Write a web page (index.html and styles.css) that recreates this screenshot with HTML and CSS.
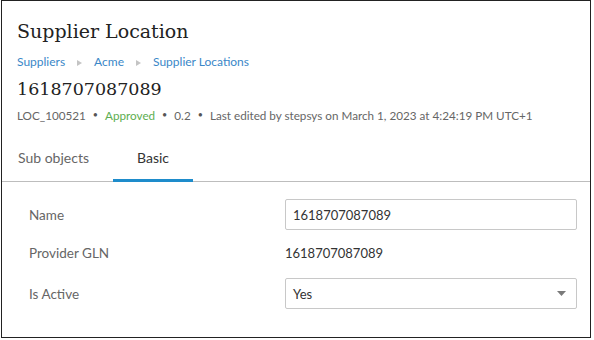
FILE: index.html
```html
<!DOCTYPE html>
<html lang="en">
<head>
<meta charset="utf-8">
<title>Supplier Location</title>
<link rel="stylesheet" href="styles.css">
</head>
<body>
<div class="panel">
  <header class="head">
    <h1 class="title">Supplier Location</h1>
    <nav class="crumbs">
      <a class="crumb" href="#">Suppliers</a>
      <span class="crumb-sep"></span>
      <a class="crumb" href="#">Acme</a>
      <span class="crumb-sep"></span>
      <a class="crumb" href="#">Supplier Locations</a>
    </nav>
    <h2 class="obj-id">1618707087089</h2>
    <div class="meta">
      <span class="meta-id">LOC_100521</span>
      <span class="dot">•</span>
      <span class="status">Approved</span>
      <span class="dot">•</span>
      <span>0.2</span>
      <span class="dot">•</span>
      <span>Last edited by stepsys on March 1, 2023 at 4:24:19 PM UTC+1</span>
    </div>
  </header>
  <div class="tabs">
    <div class="tab tab-first">Sub objects</div>
    <div class="tab tab-active">Basic</div>
  </div>
  <div class="form">
    <div class="row">
      <div class="label">Name</div>
      <div class="input">1618707087089</div>
    </div>
    <div class="row">
      <div class="label">Provider GLN</div>
      <div class="value">1618707087089</div>
    </div>
    <div class="row row-last">
      <div class="label">Is Active</div>
      <div class="input select">
        <span>Yes</span>
        <svg class="caret" width="9" height="5" viewBox="0 0 9 5"><path d="M0 0H9L4.5 5Z" fill="#7a7a7a"/></svg>
      </div>
    </div>
  </div>
</div>
</body>
</html>
```

FILE: styles.css
```css
* { box-sizing: border-box; }
html, body { margin: 0; padding: 0; background: #fff; }
body {
  font-family: Lato, "Open Sans", sans-serif;
  font-size: 12px;
  color: #333;
}
.panel {
  margin-left: 1px;
  width: 590px;
  height: 338px;
  border: 1px solid #222;
  background: #fff;
}
.head {
  padding: 17px 15px 0 15px;
}
.title {
  margin: 0;
  font-family: "DejaVu Serif", serif;
  font-weight: normal;
  font-size: 19px;
  line-height: 26px;
  color: #222;
}
.crumbs {
  margin-top: 9px;
  line-height: 18px;
  display: flex;
  align-items: center;
  white-space: nowrap;
}
.crumb {
  color: #3a87c8;
  text-decoration: none;
}
.crumb-sep {
  width: 0;
  height: 0;
  border-top: 3px solid transparent;
  border-bottom: 3px solid transparent;
  border-left: 5px solid #c4c4c4;
  margin: 1px 12px 0 12px;
}
.obj-id {
  margin: 7px 0 0 0;
  font-family: "DejaVu Serif", serif;
  font-weight: normal;
  font-size: 17.5px;
  line-height: 22px;
  color: #222;
}
.meta {
  margin-top: 6px;
  line-height: 18px;
  font-size: 11.7px;
  color: #666;
  display: flex;
  align-items: center;
  white-space: nowrap;
}
.dot {
  margin: 0 7px;
  font-size: 9px;
  color: #555;
}
.status { color: #5cae4f; }
.tabs {
  margin-top: 13px;
  display: flex;
  padding-left: 15px;
  border-bottom: 1px solid #bdbdbd;
}
.tab {
  padding: 12px 24px 12px 24px;
  line-height: 18px;
  font-size: 14px;
  color: #666;
  border-bottom: 3px solid transparent;
  margin-bottom: -1px;
}
.tab-first {
  padding-left: 1px;
}
.tab-active {
  color: #333;
  border-bottom-color: #1e8ccb;
}
.form {
  padding: 17px 12px 0 27px;
  display: flex;
  flex-direction: column;
  gap: 7px;
}
.row {
  display: grid;
  grid-template-columns: 256px 292px;
  align-items: center;
  min-height: 31px;
}
.row-last { margin-top: 3px; }
.label {
  font-size: 13.5px;
  color: #666;
}
.value {
  font-size: 13px;
  color: #333;
}
.input {
  height: 31px;
  border: 1px solid #c8c8c8;
  border-radius: 2px;
  padding: 0 7px;
  display: flex;
  align-items: center;
  font-size: 13px;
  color: #333;
}
.select {
  justify-content: space-between;
  padding-right: 10px;
}
.caret { display: block; }
```
